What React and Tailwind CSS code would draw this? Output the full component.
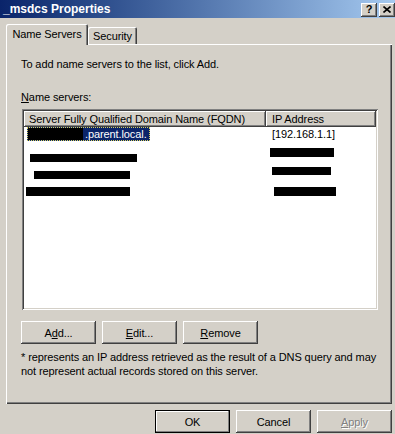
import React from 'react';

const raised =
  'shadow-[inset_-1px_-1px_#404040,inset_1px_1px_#ffffff,inset_-2px_-2px_#808080,inset_2px_2px_#d4d0c8]';
const sunken =
  'shadow-[inset_1px_1px_#808080,inset_-1px_-1px_#ffffff,inset_2px_2px_#404040,inset_-2px_-2px_#d4d0c8]';

const Button = ({ children, isDefault, disabled }) => (
  <div
    className={
      'flex h-[23px] w-[75px] items-center justify-center bg-[#d4d0c8] ' +
      (isDefault
        ? 'shadow-[inset_0_0_0_1px_#000000,inset_-2px_-2px_#808080,inset_2px_2px_#ffffff]'
        : raised) +
      (disabled ? ' text-[#808080] [text-shadow:1px_1px_0_#ffffff]' : ' text-black')
    }
  >
    {children}
  </div>
);

const TitleButton = ({ children }) => (
  <div className={'flex h-[14px] w-[16px] items-center justify-center bg-[#d4d0c8] text-[11px] font-bold leading-none text-black ' + raised}>
    {children}
  </div>
);

const Bar = ({ className }) => <div className={'bg-black ' + className} />;

const App = () => (
  <div
    className="h-[434px] w-[395px] overflow-hidden bg-[#d4d0c8] text-[11px] leading-[14px] tracking-[-0.1px] text-black"
    style={{ fontFamily: '"Liberation Sans", Arial, sans-serif' }}
  >
    {/* title bar */}
    <div className="flex h-[18px] items-center justify-between bg-gradient-to-r from-[#0a246a] to-[#a6caf0] pl-[3px]">
      <span className="text-[12px] font-bold tracking-normal text-white">_msdcs Properties</span>
      <div className="flex gap-[2px] pt-[1px]">
        <TitleButton>?</TitleButton>
        <TitleButton>
          <svg width="8" height="7" viewBox="0 0 8 7">
            <path d="M0.5 0.5 L7.5 6.5 M7.5 0.5 L0.5 6.5" stroke="#000" strokeWidth="1.6" />
          </svg>
        </TitleButton>
      </div>
    </div>

    {/* tabs */}
    <div className="ml-[6px] mt-[6px] flex h-[20px] items-end">
      <div className="relative z-10 -mb-[1px] flex h-[21px] w-[82px] items-start justify-center rounded-t-[2px] bg-[#d4d0c8] pt-[3px] shadow-[inset_1px_1px_#ffffff,inset_-1px_0_#404040,inset_-2px_0_#808080]">
        Name Servers
      </div>
      <div className="flex h-[17px] w-[49px] items-start justify-center rounded-t-[2px] pt-[2px] shadow-[inset_1px_1px_#ffffff,inset_-1px_0_#404040,inset_-2px_0_#808080]">
        Security
      </div>
    </div>

    {/* panel */}
    <div className="ml-[6px] flex h-[360px] w-[386px] flex-col pl-[15px] pt-[13px] shadow-[inset_1px_1px_#ffffff,inset_-1px_-1px_#404040,inset_-2px_-2px_#808080]">
      <p className="h-[14px]">To add name servers to the list, click Add.</p>
      <p className="mt-[19px] h-[14px]">
        <span className="underline">N</span>ame servers:
      </p>

      <div className={'ml-[1px] mt-[5px] flex h-[201px] w-[356px] flex-col bg-white p-[2px] ' + sunken}>
        <div className="flex h-[16px]">
          <div className="flex h-[16px] w-[242px] items-center bg-[#d4d0c8] pl-[5px] shadow-[inset_-1px_-1px_#404040,inset_1px_1px_#ffffff,inset_-2px_-2px_#808080]">
            Server Fully Qualified Domain Name (FQDN)
          </div>
          <div className="flex h-[16px] w-[110px] items-center bg-[#d4d0c8] pl-[6px] shadow-[inset_-1px_-1px_#404040,inset_1px_1px_#ffffff,inset_-2px_-2px_#808080]">
            IP Address
          </div>
        </div>

        <div className="flex">
          <div className="flex w-[242px] flex-col">
            <div className="ml-[3px] flex h-[14px] w-fit items-center gap-[2px] bg-[#0a246a] pl-[1px] pr-[3px] text-white outline outline-1 -outline-offset-1 outline-dotted outline-[#d8d060]">
              <div className="h-[12px] w-[55px] bg-black" />
              <span>.parent.local.</span>
            </div>
            <Bar className="ml-[6px] mt-[13px] h-[8px] w-[107px]" />
            <Bar className="ml-[10px] mt-[9px] h-[8px] w-[96px]" />
            <Bar className="ml-[2px] mt-[8px] h-[9px] w-[104px]" />
          </div>
          <div className="flex flex-col">
            <div className="h-[14px] pl-[6px]">[192.168.1.1]</div>
            <Bar className="ml-[4px] mt-[7px] h-[9px] w-[64px]" />
            <Bar className="ml-[6px] mt-[10px] h-[8px] w-[59px]" />
            <Bar className="ml-[8px] mt-[12px] h-[9px] w-[62px]" />
          </div>
        </div>
      </div>

      <div className="mt-[11px] flex gap-[6px]">
        <Button>
          A<span className="underline">d</span>d...
        </Button>
        <Button>
          <span className="underline">E</span>dit...
        </Button>
        <Button>
          <span className="underline">R</span>emove
        </Button>
      </div>

      <p className="mt-[6px] w-[362px]">
        * represents an IP address retrieved as the result of a DNS query and may not represent actual records stored
        on this server.
      </p>
    </div>

    {/* dialog buttons */}
    <div className="mt-[6px] flex justify-end gap-[6px] pr-[3px]">
      <Button isDefault>OK</Button>
      <Button>Cancel</Button>
      <Button disabled>
        <span className="underline">A</span>pply
      </Button>
    </div>
  </div>
);

export default App;
